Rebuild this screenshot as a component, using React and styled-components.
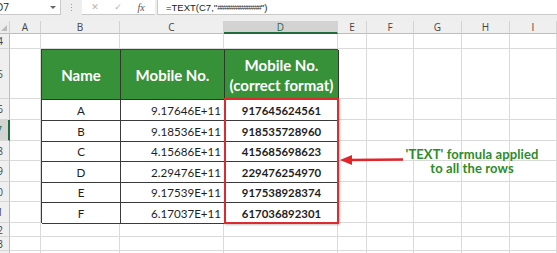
import React from 'react';
import styled, { createGlobalStyle, css } from 'styled-components';

const GlobalStyle = createGlobalStyle`
  html, body { margin: 0; padding: 0; background: #fff; }
  body { width: 557px; height: 253px; overflow: hidden; font-family: "Liberation Sans", Arial, sans-serif; }
  * { box-sizing: border-box; }
`;

const Frame = styled.div`
  width: 557px;
  height: 253px;
  display: flex;
  flex-direction: column;
  background: #fff;
  overflow: hidden;
`;

/* ---------- formula bar ---------- */
const FormulaBar = styled.div`
  flex: none;
  height: 21px;
  display: flex;
  align-items: flex-start;
  background: #eeeeee;
`;

const NameBox = styled.div`
  width: 61px;
  height: 15px;
  display: flex;
  align-items: center;
  justify-content: space-between;
  background: #fff;
  border-right: 1px solid #c9c9c9;
  border-bottom: 1px solid #c9c9c9;
  padding-right: 4px;
  font-family: "Open Sans", sans-serif;
  font-size: 10px;
  color: #222;
`;

const NameText = styled.span`
  margin-left: -4px;
`;

const Caret = styled.span`
  width: 0;
  height: 0;
  border-left: 3px solid transparent;
  border-right: 3px solid transparent;
  border-top: 3px solid #666;
`;

const Grip = styled.div`
  width: 21px;
  height: 15px;
  display: flex;
  flex-direction: column;
  align-items: center;
  justify-content: center;
  gap: 2px;
`;

const GripDot = styled.span`
  width: 1px;
  height: 1px;
  background: #9a9a9a;
`;

const ActionBox = styled.div`
  width: 73px;
  height: 15px;
  display: flex;
  align-items: center;
  gap: 15px;
  padding-left: 9px;
  background: #fff;
  border-bottom: 1px solid #c9c9c9;
`;

const ActionIcon = styled.span`
  width: 8px;
  display: flex;
  justify-content: center;
  font-family: ${p => (p.$fx ? '"Liberation Serif", serif' : '"DejaVu Sans", sans-serif')};
  font-style: ${p => (p.$fx ? 'italic' : 'normal')};
  font-size: ${p => (p.$fx ? '10px' : '9px')};
  color: ${p => (p.$fx ? '#555' : '#b4b4b4')};
`;

const FormulaInput = styled.div`
  flex: 1;
  height: 15px;
  margin-left: 2px;
  display: flex;
  align-items: center;
  padding-left: 8px;
  background: #fff;
  border-left: 1px solid #c9c9c9;
  border-bottom: 1px solid #c9c9c9;
  font-family: "Liberation Sans", Arial, sans-serif;
  font-size: 9.5px;
  color: #222;
  white-space: nowrap;
`;

const Hashes = styled.span`
  letter-spacing: -0.8px;
  font-size: 8px;
  color: #333;
`;

/* ---------- sheet ---------- */
const Sheet = styled.div`
  flex: 1;
  display: grid;
  grid-template-columns: 10px 31px 79px 104px 114px 29px 47px 48px 48px 1fr;
  grid-template-rows: 13px 15px 50px 21px 21px 20px 21px 20px 21px 14px 14px 1fr;
`;

const place = css`
  grid-column: ${p => p.$col} / span ${p => p.$cspan || 1};
  grid-row: ${p => p.$row} / span ${p => p.$rspan || 1};
`;

const Corner = styled.div`
  ${place};
  position: relative;
  background: #ececec;
  border-right: 1px solid #cfcfcf;
  border-bottom: 1px solid #bdbdbd;
  &::after {
    content: '';
    position: absolute;
    right: 2px;
    bottom: 2px;
    border-left: 6px solid transparent;
    border-bottom: 6px solid #b9b9b9;
  }
`;

const ColHead = styled.div`
  ${place};
  display: flex;
  align-items: center;
  justify-content: center;
  background: ${p => (p.$active ? '#d3d3d3' : '#efefef')};
  border-right: 1px solid #d2d2d2;
  border-bottom: ${p => (p.$active ? '2px solid #1f6b3a' : '1px solid #bdbdbd')};
  font-family: "Open Sans", sans-serif;
  font-size: 10px;
  color: ${p => (p.$active ? '#2a6a3e' : '#444')};
`;

const RowHead = styled.div`
  ${place};
  display: flex;
  align-items: center;
  justify-content: flex-end;
  overflow: hidden;
  white-space: nowrap;
  padding-right: 6px;
  background: ${p => (p.$active ? '#d3d3d3' : '#efefef')};
  border-right: ${p => (p.$active ? '2px solid #1f6b3a' : '1px solid #bdbdbd')};
  border-bottom: 1px solid #d6d6d6;
  font-family: "Open Sans", sans-serif;
  font-size: 10px;
  color: ${p => (p.$active ? '#2a6a3e' : '#444')};
`;

const GridCell = styled.div`
  ${place};
  border-right: 1px solid #dadada;
  border-bottom: 1px solid #dadada;
`;

/* ---------- data table ---------- */
const DataTable = styled.div`
  ${place};
  display: grid;
  grid-template-columns: 79px 104px 114px;
  grid-template-rows: 50px 21px 21px 20px 21px 20px 21px;
  border-left: 1px solid #3a3a3a;
  border-top: 1px solid #2f4f34;
  background: #fff;
`;

const HeadCell = styled.div`
  display: flex;
  align-items: center;
  justify-content: center;
  text-align: center;
  background: #379139;
  border-right: 1px solid #2c3a2c;
  border-bottom: 1px solid #2c3a2c;
  font-family: Lato, "Open Sans", sans-serif;
  font-weight: 700;
  font-size: 15px;
  line-height: 20px;
  color: #fff;
`;

const BodyCell = styled.div`
  display: flex;
  align-items: center;
  justify-content: ${p => (p.$align === 'right' ? 'flex-end' : 'center')};
  padding-right: ${p => (p.$align === 'right' ? '3px' : '0')};
  border-right: 1px solid #3a3a3a;
  border-bottom: 1px solid #3a3a3a;
  font-family: Lato, "Open Sans", sans-serif;
  font-weight: ${p => (p.$bold ? 700 : 400)};
  font-size: ${p => (p.$bold ? '11.4px' : '11.6px')};
  color: #1e1e1e;
`;

const Highlight = styled.div`
  ${place};
  margin: -1px -1px -1px 0;
  border: 2.5px solid #dc2a2f;
  box-shadow: 1px 1px 2px rgba(0, 0, 0, 0.25);
`;

const Annotation = styled.div`
  ${place};
  display: flex;
  align-items: center;
  padding-left: 2px;
  padding-bottom: 2px;
`;

const ArrowSvg = styled.svg`
  flex: none;
  margin-top: -1px;
`;

const Note = styled.div`
  width: 136px;
  flex: none;
  text-align: center;
  font-family: Lato, "Open Sans", sans-serif;
  font-weight: 700;
  font-size: 13px;
  letter-spacing: 0.1px;
  line-height: 14px;
  color: #2b8c2b;
`;

const columns = ['A', 'B', 'C', 'D', 'E', 'F', 'G', 'H', 'I'];
const rowNums = [4, 5, 6, 7, 8, 9, 10, 11, 12, 13, 14];

const data = [
  ['A', '9.17646E+11', '917645624561'],
  ['B', '9.18536E+11', '918535728960'],
  ['C', '4.15686E+11', '415685698623'],
  ['D', '2.29476E+11', '229476254970'],
  ['E', '9.17539E+11', '917538928374'],
  ['F', '6.17037E+11', '617036892301'],
];

function inTable(r, c) {
  return r >= 5 && r <= 11 && c >= 1 && c <= 3;
}

export default function App() {
  return (
    <>
      <GlobalStyle />
      <Frame>
        <FormulaBar>
          <NameBox>
            <NameText>D7</NameText>
            <Caret />
          </NameBox>
          <Grip>
            <GripDot />
            <GripDot />
            <GripDot />
          </Grip>
          <ActionBox>
            <ActionIcon>✕</ActionIcon>
            <ActionIcon>✓</ActionIcon>
            <ActionIcon $fx>fx</ActionIcon>
          </ActionBox>
          <FormulaInput>
            =TEXT(C7,"<Hashes>############</Hashes>")
          </FormulaInput>
        </FormulaBar>

        <Sheet>
          <Corner $col={1} $row={1} />
          {columns.map((c, i) => (
            <ColHead key={c} $col={i + 2} $row={1} $active={c === 'D'}>
              {c}
            </ColHead>
          ))}
          {rowNums.map((n, ri) => (
            <React.Fragment key={n}>
              <RowHead $col={1} $row={ri + 2} $active={n === 7}>
                {n}
              </RowHead>
              {columns.map((c, ci) =>
                inTable(n, ci) ? null : (
                  <GridCell key={c} $col={ci + 2} $row={ri + 2} />
                )
              )}
            </React.Fragment>
          ))}

          <DataTable $col={3} $row={3} $cspan={3} $rspan={7}>
            <HeadCell>Name</HeadCell>
            <HeadCell>Mobile No.</HeadCell>
            <HeadCell>
              Mobile No.
              <br />
              (correct format)
            </HeadCell>
            {data.map(([name, sci, full]) => (
              <React.Fragment key={name}>
                <BodyCell>{name}</BodyCell>
                <BodyCell $align="right">{sci}</BodyCell>
                <BodyCell $bold>{full}</BodyCell>
              </React.Fragment>
            ))}
          </DataTable>

          <Highlight $col={5} $row={4} $rspan={6} />

          <Annotation $col={6} $row={6} $cspan={5} $rspan={2}>
            <ArrowSvg width="64" height="12" viewBox="0 0 64 12">
              <line x1="9" y1="6" x2="63" y2="5.5" stroke="#e0262b" strokeWidth="2.6" />
              <polygon points="0,6 12,1 12,11" fill="#e0262b" />
            </ArrowSvg>
            <Note>
              'TEXT' formula applied
              <br />
              to all the rows
            </Note>
          </Annotation>
        </Sheet>
      </Frame>
    </>
  );
}
